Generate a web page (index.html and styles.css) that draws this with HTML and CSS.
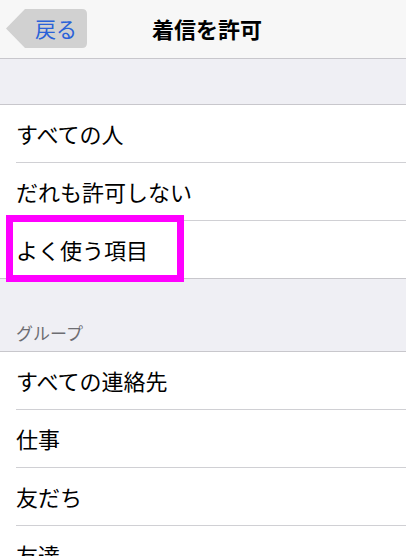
FILE: index.html
```html
<!DOCTYPE html>
<html lang="ja">
<head>
<meta charset="utf-8">
<link rel="stylesheet" href="styles.css">
</head>
<body>
<div class="screen">
  <header class="nav">
    <div class="back">
      <svg class="back-shape" width="81" height="39" viewBox="0 0 81 39"><path d="M19 0 H76 Q81 0 81 5 V34 Q81 39 76 39 H19 L0 19.5 Z" fill="#d1d1d1"/></svg>
      <span class="back-label">戻る</span>
    </div>
    <h1 class="title">着信を許可</h1>
  </header>
  <div class="spacer"></div>
  <ul class="list">
    <li class="row"><span>すべての人</span></li>
    <li class="row"><span>だれも許可しない</span></li>
    <li class="row"><span>よく使う項目</span></li>
  </ul>
  <div class="section-head">グループ</div>
  <ul class="list">
    <li class="row"><span>すべての連絡先</span></li>
    <li class="row"><span>仕事</span></li>
    <li class="row"><span>友だち</span></li>
    <li class="row"><span>友達</span></li>
  </ul>
  <div class="highlight"></div>
</div>
</body>
</html>
```

FILE: styles.css
```css
html, body {
  margin: 0;
  padding: 0;
}
body {
  width: 406px;
  height: 556px;
  overflow: hidden;
  background: #efeff4;
  font-family: "Noto Sans CJK JP", "Noto Sans", sans-serif;
  color: #000;
}
.screen {
  position: relative;
  width: 406px;
  height: 556px;
  overflow: hidden;
}
.nav {
  height: 58px;
  background: #f7f7f7;
  border-bottom: 1px solid #c8c7cc;
  display: flex;
  align-items: center;
}
.back {
  display: grid;
  margin-left: 6px;
  margin-top: -1px;
}
.back-shape,
.back-label {
  grid-area: 1 / 1;
}
.back-label {
  align-self: center;
  margin-left: 29px;
  font-size: 21px;
  line-height: 39px;
  color: #2a62d8;
}
.title {
  margin: 0 0 2px 65px;
  font-size: 22px;
  font-weight: 700;
  line-height: 1;
}
.spacer {
  height: 45px;
}
.list {
  list-style: none;
  margin: 0;
  padding: 0 0 0 16px;
  background: #fff;
  border-top: 1px solid #c8c7cc;
  border-bottom: 1px solid #c8c7cc;
}
.row {
  height: 55px;
  padding-bottom: 2px;
  display: flex;
  align-items: center;
  font-size: 22px;
  border-bottom: 1px solid #d0d0d4;
}
.row:last-child {
  border-bottom: none;
}
.section-head {
  height: 72px;
  box-sizing: border-box;
  padding: 0 16px 7px;
  display: flex;
  align-items: flex-end;
  font-size: 17px;
  line-height: 22px;
  color: #6d6d72;
}
.highlight {
  position: absolute;
  left: 6px;
  top: 215px;
  width: 178px;
  height: 67px;
  box-sizing: border-box;
  border: 7px solid #ff00ff;
}
```
